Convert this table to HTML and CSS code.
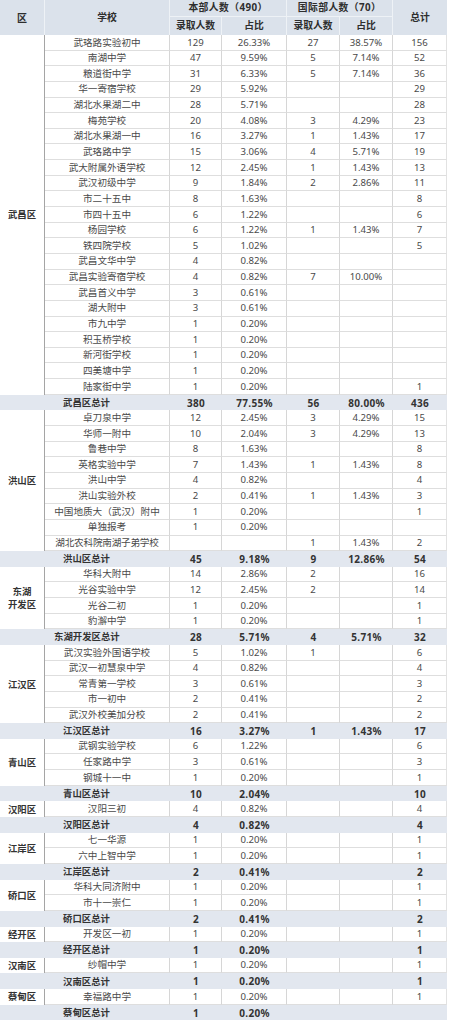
FILE: index.html
```html
<!DOCTYPE html>
<html lang="zh-CN">
<head>
<meta charset="utf-8">
<title>录取人数统计</title>
<link rel="stylesheet" href="styles.css">
</head>
<body>
<table class="stats">
<colgroup>
<col class="c-dist"><col class="c-school"><col class="c-n"><col class="c-p"><col class="c-n2"><col class="c-p2"><col class="c-t">
</colgroup>
<thead>
<tr class="h1">
<th rowspan="2" class="h-dist">区</th>
<th rowspan="2">学校</th>
<th colspan="2" class="grp">本部人数（490）</th>
<th colspan="2" class="grp">国际部人数（70）</th>
<th rowspan="2" class="h-last">总计</th>
</tr>
<tr class="h2">
<th>录取人数</th><th>占比</th><th>录取人数</th><th>占比</th>
</tr>
</thead>
<tbody>
<tr><td rowspan="23" class="dist">武昌区</td><td>武珞路实验初中</td><td>129</td><td>26.33%</td><td>27</td><td>38.57%</td><td class="last">156</td></tr>
<tr><td>南湖中学</td><td>47</td><td>9.59%</td><td>5</td><td>7.14%</td><td class="last">52</td></tr>
<tr><td>粮道街中学</td><td>31</td><td>6.33%</td><td>5</td><td>7.14%</td><td class="last">36</td></tr>
<tr><td>华一寄宿学校</td><td>29</td><td>5.92%</td><td></td><td></td><td class="last">29</td></tr>
<tr><td>湖北水果湖二中</td><td>28</td><td>5.71%</td><td></td><td></td><td class="last">28</td></tr>
<tr><td>梅苑学校</td><td>20</td><td>4.08%</td><td>3</td><td>4.29%</td><td class="last">23</td></tr>
<tr><td>湖北水果湖一中</td><td>16</td><td>3.27%</td><td>1</td><td>1.43%</td><td class="last">17</td></tr>
<tr><td>武珞路中学</td><td>15</td><td>3.06%</td><td>4</td><td>5.71%</td><td class="last">19</td></tr>
<tr><td>武大附属外语学校</td><td>12</td><td>2.45%</td><td>1</td><td>1.43%</td><td class="last">13</td></tr>
<tr><td>武汉初级中学</td><td>9</td><td>1.84%</td><td>2</td><td>2.86%</td><td class="last">11</td></tr>
<tr><td>市二十五中</td><td>8</td><td>1.63%</td><td></td><td></td><td class="last">8</td></tr>
<tr><td>市四十五中</td><td>6</td><td>1.22%</td><td></td><td></td><td class="last">6</td></tr>
<tr><td>杨园学校</td><td>6</td><td>1.22%</td><td>1</td><td>1.43%</td><td class="last">7</td></tr>
<tr><td>铁四院学校</td><td>5</td><td>1.02%</td><td></td><td></td><td class="last">5</td></tr>
<tr><td>武昌文华中学</td><td>4</td><td>0.82%</td><td></td><td></td><td class="last"></td></tr>
<tr><td>武昌实验寄宿学校</td><td>4</td><td>0.82%</td><td>7</td><td>10.00%</td><td class="last"></td></tr>
<tr><td>武昌首义中学</td><td>3</td><td>0.61%</td><td></td><td></td><td class="last"></td></tr>
<tr><td>湖大附中</td><td>3</td><td>0.61%</td><td></td><td></td><td class="last"></td></tr>
<tr><td>市九中学</td><td>1</td><td>0.20%</td><td></td><td></td><td class="last"></td></tr>
<tr><td>积玉桥学校</td><td>1</td><td>0.20%</td><td></td><td></td><td class="last"></td></tr>
<tr><td>新河街学校</td><td>1</td><td>0.20%</td><td></td><td></td><td class="last"></td></tr>
<tr><td>四美塘中学</td><td>1</td><td>0.20%</td><td></td><td></td><td class="last"></td></tr>
<tr><td>陆家街中学</td><td>1</td><td>0.20%</td><td></td><td></td><td class="last">1</td></tr>
<tr class="sub"><td></td><td class="sub-label">武昌区总计</td><td>380</td><td>77.55%</td><td>56</td><td>80.00%</td><td>436</td></tr>

<tr><td rowspan="9" class="dist">洪山区</td><td>卓刀泉中学</td><td>12</td><td>2.45%</td><td>3</td><td>4.29%</td><td class="last">15</td></tr>
<tr><td>华师一附中</td><td>10</td><td>2.04%</td><td>3</td><td>4.29%</td><td class="last">13</td></tr>
<tr><td>鲁巷中学</td><td>8</td><td>1.63%</td><td></td><td></td><td class="last">8</td></tr>
<tr><td>英格实验中学</td><td>7</td><td>1.43%</td><td>1</td><td>1.43%</td><td class="last">8</td></tr>
<tr><td>洪山中学</td><td>4</td><td>0.82%</td><td></td><td></td><td class="last">4</td></tr>
<tr><td>洪山实验外校</td><td>2</td><td>0.41%</td><td>1</td><td>1.43%</td><td class="last">3</td></tr>
<tr><td>中国地质大（武汉）附中</td><td>1</td><td>0.20%</td><td></td><td></td><td class="last">1</td></tr>
<tr><td>单独报考</td><td>1</td><td>0.20%</td><td></td><td></td><td class="last"></td></tr>
<tr><td class="narrow">湖北农科院南湖子弟学校</td><td></td><td></td><td>1</td><td>1.43%</td><td class="last">2</td></tr>
<tr class="sub"><td></td><td class="sub-label">洪山区总计</td><td>45</td><td>9.18%</td><td>9</td><td>12.86%</td><td>54</td></tr>

<tr><td rowspan="4" class="dist">东湖<br>开发区</td><td>华科大附中</td><td>14</td><td>2.86%</td><td>2</td><td></td><td class="last">16</td></tr>
<tr><td>光谷实验中学</td><td>12</td><td>2.45%</td><td>2</td><td></td><td class="last">14</td></tr>
<tr><td>光谷二初</td><td>1</td><td>0.20%</td><td></td><td></td><td class="last">1</td></tr>
<tr><td>豹澥中学</td><td>1</td><td>0.20%</td><td></td><td></td><td class="last">1</td></tr>
<tr class="sub"><td></td><td class="sub-label sub-wide">东湖开发区总计</td><td>28</td><td>5.71%</td><td>4</td><td>5.71%</td><td>32</td></tr>

<tr><td rowspan="5" class="dist">江汉区</td><td>武汉实验外国语学校</td><td>5</td><td>1.02%</td><td>1</td><td></td><td class="last">6</td></tr>
<tr><td>武汉一初慧泉中学</td><td>4</td><td>0.82%</td><td></td><td></td><td class="last">4</td></tr>
<tr><td>常青第一学校</td><td>3</td><td>0.61%</td><td></td><td></td><td class="last">3</td></tr>
<tr><td>市一初中</td><td>2</td><td>0.41%</td><td></td><td></td><td class="last">2</td></tr>
<tr><td>武汉外校美加分校</td><td>2</td><td>0.41%</td><td></td><td></td><td class="last">2</td></tr>
<tr class="sub"><td></td><td class="sub-label">江汉区总计</td><td>16</td><td>3.27%</td><td>1</td><td>1.43%</td><td>17</td></tr>

<tr><td rowspan="3" class="dist">青山区</td><td>武钢实验学校</td><td>6</td><td>1.22%</td><td></td><td></td><td class="last">6</td></tr>
<tr><td>任家路中学</td><td>3</td><td>0.61%</td><td></td><td></td><td class="last">3</td></tr>
<tr><td>钢城十一中</td><td>1</td><td>0.20%</td><td></td><td></td><td class="last">1</td></tr>
<tr class="sub"><td></td><td class="sub-label">青山区总计</td><td>10</td><td>2.04%</td><td></td><td></td><td>10</td></tr>

<tr><td class="dist">汉阳区</td><td>汉阳三初</td><td>4</td><td>0.82%</td><td></td><td></td><td class="last">4</td></tr>
<tr class="sub"><td></td><td class="sub-label">汉阳区总计</td><td>4</td><td>0.82%</td><td></td><td></td><td>4</td></tr>

<tr><td rowspan="2" class="dist">江岸区</td><td>七一华源</td><td>1</td><td>0.20%</td><td></td><td></td><td class="last">1</td></tr>
<tr><td>六中上智中学</td><td>1</td><td>0.20%</td><td></td><td></td><td class="last">1</td></tr>
<tr class="sub"><td></td><td class="sub-label">江岸区总计</td><td>2</td><td>0.41%</td><td></td><td></td><td>2</td></tr>

<tr><td rowspan="2" class="dist">硚口区</td><td>华科大同济附中</td><td>1</td><td>0.20%</td><td></td><td></td><td class="last">1</td></tr>
<tr><td>市十一崇仁</td><td>1</td><td>0.20%</td><td></td><td></td><td class="last">1</td></tr>
<tr class="sub"><td></td><td class="sub-label">硚口区总计</td><td>2</td><td>0.41%</td><td></td><td></td><td>2</td></tr>

<tr><td class="dist">经开区</td><td>开发区一初</td><td>1</td><td>0.20%</td><td></td><td></td><td class="last">1</td></tr>
<tr class="sub"><td></td><td class="sub-label">经开区总计</td><td>1</td><td>0.20%</td><td></td><td></td><td>1</td></tr>

<tr><td class="dist">汉南区</td><td>纱帽中学</td><td>1</td><td>0.20%</td><td></td><td></td><td class="last">1</td></tr>
<tr class="sub"><td></td><td class="sub-label">汉南区总计</td><td>1</td><td>0.20%</td><td></td><td></td><td>1</td></tr>

<tr><td class="dist">蔡甸区</td><td>幸福路中学</td><td>1</td><td>0.20%</td><td></td><td></td><td class="last">1</td></tr>
<tr class="sub"><td></td><td class="sub-label">蔡甸区总计</td><td>1</td><td>0.20%</td><td></td><td></td><td></td></tr>
</tbody>
</table>
</body>
</html>
```

FILE: styles.css
```css
html, body {
  margin: 0;
  padding: 0;
  background: #ffffff;
}

body {
  font-family: "Noto Sans", "Noto Sans CJK SC", sans-serif;
  color: #4a4a4a;
}

.stats {
  width: 447px;
  table-layout: fixed;
  border-collapse: separate;
  border-spacing: 0;
  font-size: 9.6px;
}

.c-dist { width: 45px; }
.c-school { width: 125px; }
.c-n { width: 52px; }
.c-p { width: 65px; }
.c-n2 { width: 53px; }
.c-p2 { width: 53px; }
.c-t { width: 54px; }

.stats th,
.stats td {
  padding: 0;
  text-align: center;
  vertical-align: middle;
  white-space: nowrap;
  overflow: hidden;
  line-height: 1;
}

/* header */
.stats thead th {
  background: #dbe2eb;
  color: #2e2e2e;
  font-weight: 700;
  font-size: 9.8px;
  border-right: 1px solid #eef2f6;
}

.stats thead .h-last {
  border-right: none;
}

.stats .h1 {
  height: 17px;
}

.stats .h2 {
  height: 18px;
}

.stats .grp {
  border-bottom: 1px solid #eef2f6;
  letter-spacing: 0.4px;
}

.stats .h-dist {
  font-size: 10px;
}

/* body rows */
.stats tbody tr {
  height: 15.65px;
}

.stats tbody td {
  border-right: 1px solid #d6d6d6;
  border-bottom: 1px solid #dedede;
}

.stats tbody td.last {
  border-right: 1px solid #e2e2e2;
}

.stats tbody td.dist {
  border-right: 1px solid #a5a5a5;
  border-bottom: none;
  font-weight: 700;
  color: #333333;
  font-size: 9.4px;
  line-height: 13px;
}

.stats .narrow {
  letter-spacing: -0.2px;
}

/* subtotal rows */
.stats tr.sub td {
  background: #e2e7ef;
  border-right: none;
  border-bottom: none;
  font-weight: 700;
  color: #333333;
  font-size: 10px;
  letter-spacing: 0.3px;
}

.stats tr.sub td.sub-label {
  text-align: left;
  padding-left: 18px;
  font-size: 9.4px;
  letter-spacing: 0;
}

.stats tr.sub td.sub-wide {
  padding-left: 9px;
}
```
